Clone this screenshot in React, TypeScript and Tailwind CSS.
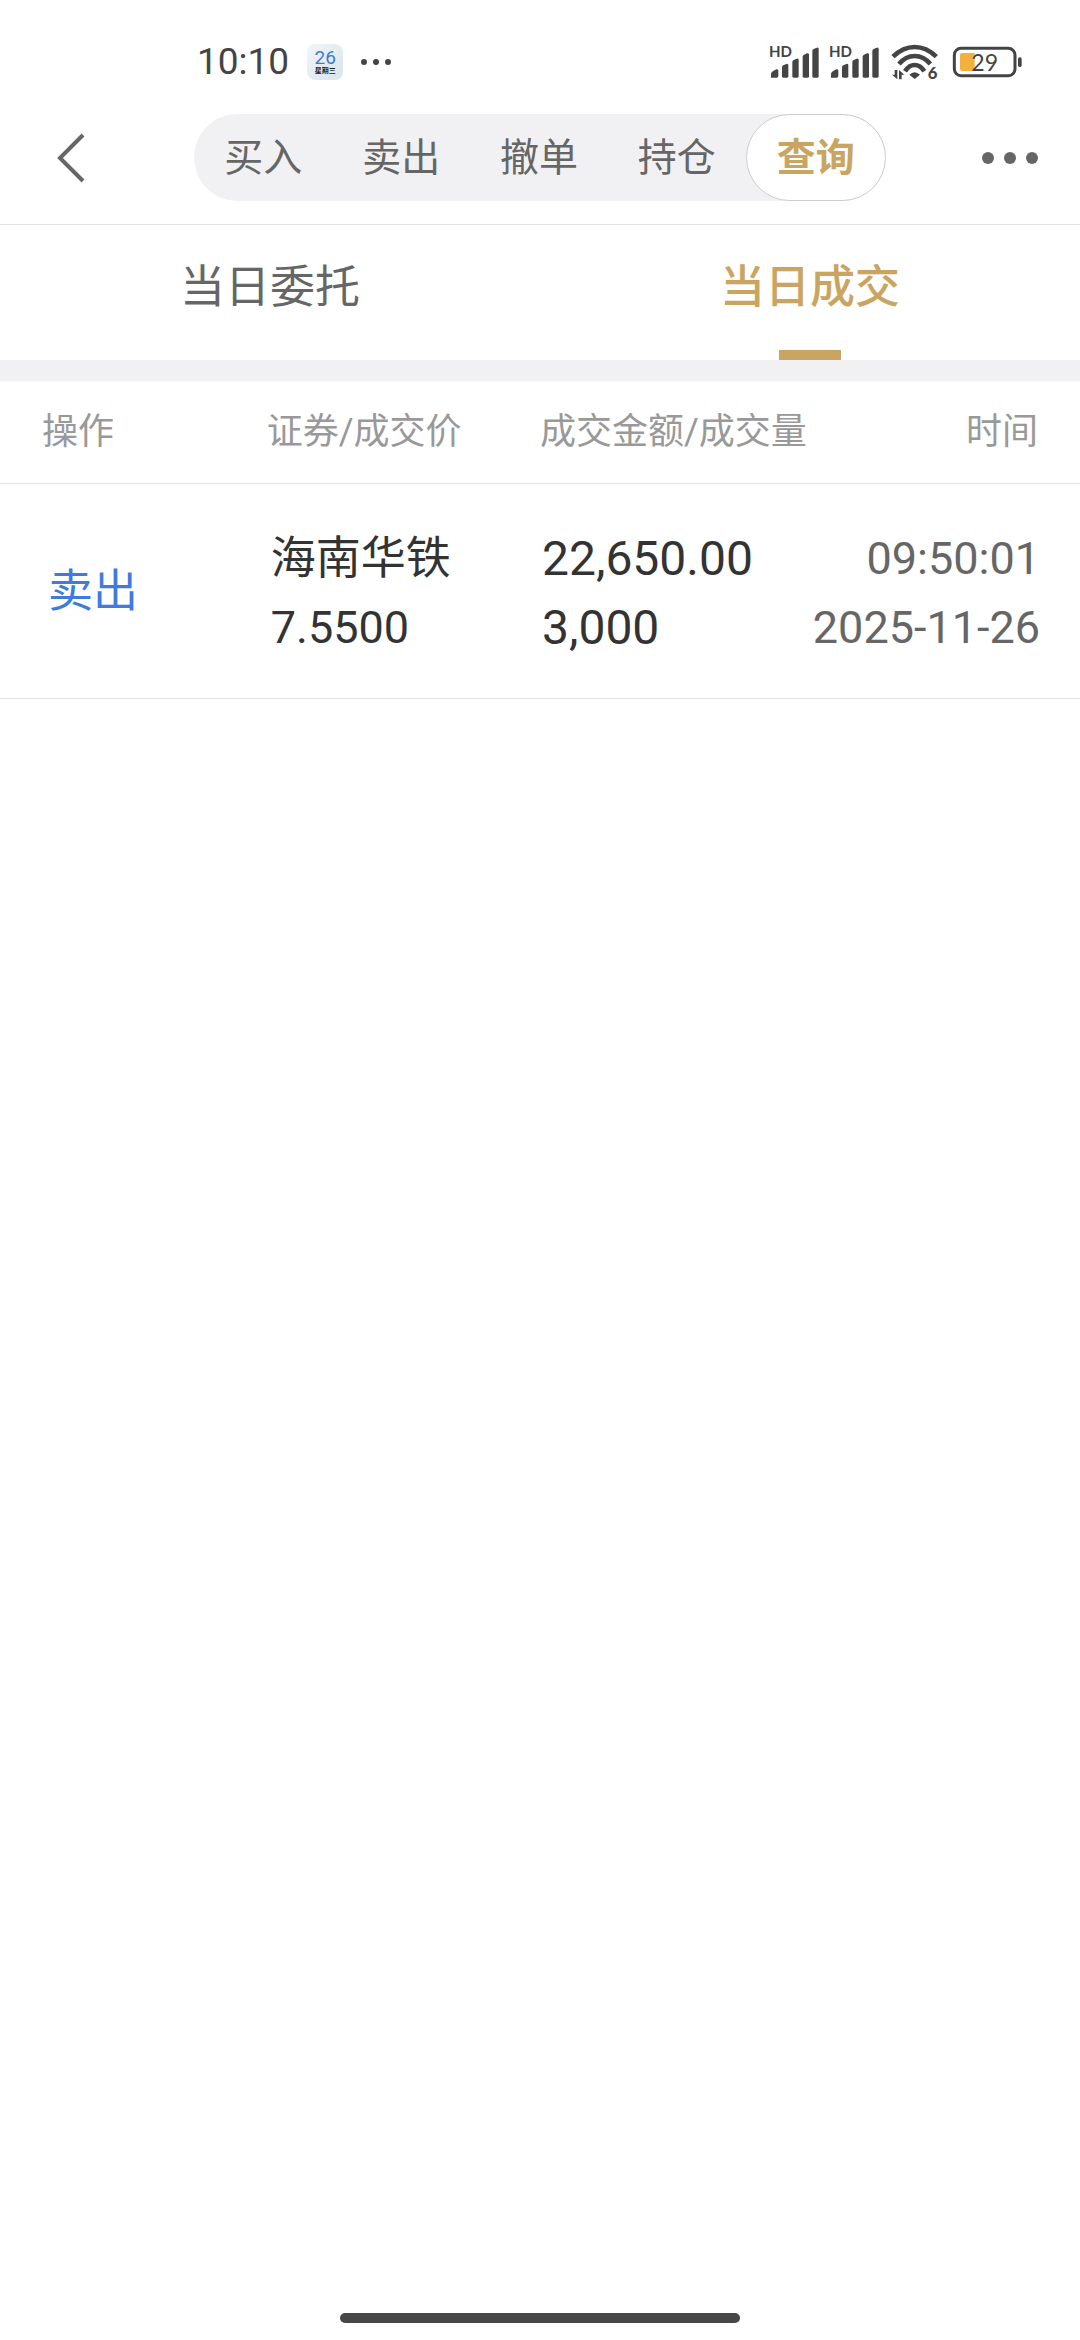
import { useState } from 'react'

type Trade = {
  side: string
  name: string
  price: string
  amount: string
  volume: string
  time: string
  date: string
}

const sections = ['买入', '卖出', '撤单', '持仓', '查询']
const tabs = ['当日委托', '当日成交']

const trades: Trade[] = [
  {
    side: '卖出',
    name: '海南华铁',
    price: '7.5500',
    amount: '22,650.00',
    volume: '3,000',
    time: '09:50:01',
    date: '2025-11-26'
  }
]

function Signal() {
  return (
    <svg viewBox="0 -15 150 126" className="w-[50px] h-[42px] overflow-visible fill-[#444]" aria-hidden="true">
      <text x="0" y="34" fontSize="45" fontWeight="700" className="font-['Lato','Open_Sans',sans-serif]">HD</text>
      <path d="M6 95V83Q7 77 14 74L22 70Q28 68 28 74V90Q28 95 23 95Z" />
      <path d="M39 91V64Q39 60 43 58L52 54Q58 52 58 58V91Q58 95 54 95H43Q39 95 39 91Z" />
      <path d="M70 91V48Q70 44 74 42L83 38Q89 36 89 42V91Q89 95 85 95H74Q70 95 70 91Z" />
      <path d="M101 91V32Q101 28 105 26L114 22Q120 20 120 26V91Q120 95 116 95H105Q101 95 101 91Z" />
      <path d="M130 91V15Q130 11 134 9L143 5Q149 3 149 9V91Q149 95 145 95H134Q130 95 130 91Z" />
    </svg>
  )
}

function Wifi() {
  return (
    <svg viewBox="0 -15 144 138" className="w-12 h-[46px] overflow-visible" aria-hidden="true">
      <g fill="none" stroke="#444" strokeWidth="14">
        <path d="M6 38Q36 9 71 9Q106 9 136 38" />
        <path d="M24 60Q44 36 71 36Q98 36 118 60" />
        <path d="M42 82Q54 63 71 63Q88 63 100 82" />
      </g>
      <path d="M55 92Q71 77 87 92L74 103Q71 106 68 103Z" fill="#444" />
      <path d="M19 78V106L3 92H11V78ZM24 106V78L40 92H32V106Z" fill="#444" />
      <text x="110" y="106" fontSize="50" fontWeight="900" fill="#444" className="font-['Lato',sans-serif]">6</text>
    </svg>
  )
}

function Battery() {
  return (
    <svg viewBox="0 0 210 96" className="w-[70px] h-8" aria-label="29%">
      <rect x="7" y="7" width="182" height="82" rx="20" fill="none" stroke="#444" strokeWidth="9" />
      <rect x="198" y="34" width="11" height="29" rx="5" fill="#444" />
      <path d="M30 21H68V75H30Q24 75 24 69V27Q24 21 30 21Z" fill="#f4b03e" />
      <text x="58" y="74" fontSize="69" fill="#444" className="font-['Lato',sans-serif]">29</text>
    </svg>
  )
}

function StatusBar() {
  return (
    <div className="flex items-center justify-between pt-9 pl-[197px] pr-[58px] text-[#444]">
      <div className="flex items-center h-[52px]">
        <span className="text-[37px] leading-[52px]">10:10</span>
        <span className="ml-[18px] size-9 rounded-lg bg-linear-to-br from-[#f1f5f8] to-[#d9e4ec] flex flex-col items-center justify-center">
          <span className="text-[19px] leading-[18px] text-[#3f7ad0]">26</span>
          <span className="text-[7px] leading-[8px] font-bold text-[#222]">星期三</span>
        </span>
        <svg viewBox="0 0 32 8" className="ml-[17px] w-8 h-2 fill-[#444]" aria-hidden="true">
          <circle cx="4" cy="4" r="3" />
          <circle cx="16" cy="4" r="3" />
          <circle cx="28" cy="4" r="3" />
        </svg>
      </div>
      <div className="flex items-center">
        <Signal />
        <span className="ml-[10px]"><Signal /></span>
        <span className="ml-3"><Wifi /></span>
        <span className="ml-[13px]"><Battery /></span>
      </div>
    </div>
  )
}

export default function App() {
  const [section, setSection] = useState('查询')
  const [tab, setTab] = useState('当日成交')

  return (
    <div className="min-h-screen flex flex-col bg-white text-[#666] font-['Roboto','Noto_Sans_CJK_SC',sans-serif]">
      <StatusBar />

      <header className="flex items-center pt-[26px] pb-[23px] border-b border-[#e2e2e2]">
        <div className="w-[18%] pl-14">
          <button aria-label="返回" className="block">
            <svg viewBox="0 0 30 50" className="w-[30px] h-[50px]" fill="none" stroke="#666" strokeWidth="4">
              <path d="M27 2L4 25L27 48" />
            </svg>
          </button>
        </div>
        <nav className="w-[64%] h-[87px] flex rounded-full bg-[#f1f1f3]">
          {sections.map(s => (
            <button
              key={s}
              onClick={() => setSection(s)}
              className={`flex-1 rounded-full text-[39px] leading-[56px] ${
                s === section ? 'bg-white border border-[#ccc] font-bold text-[#c9a561]' : ''
              }`}
            >
              {s}
            </button>
          ))}
        </nav>
        <div className="w-[18%] flex justify-end pr-[42px]">
          <button aria-label="更多">
            <svg viewBox="0 0 58 12" className="w-[58px] h-3 fill-[#666]">
              <circle cx="8" cy="6" r="6" />
              <circle cx="30" cy="6" r="6" />
              <circle cx="52" cy="6" r="6" />
            </svg>
          </button>
        </div>
      </header>

      <div className="flex border-b-[21px] border-[#f1f1f3]">
        {tabs.map(t => (
          <button
            key={t}
            onClick={() => setTab(t)}
            className={`flex-1 flex flex-col items-center text-[45px] leading-[125px] ${
              t === tab ? 'font-medium text-[#c9a561]' : ''
            }`}
          >
            {t}
            <span className={`w-[62px] h-[10px] ${t === tab ? 'bg-[#c9a561]' : ''}`}></span>
          </button>
        ))}
      </div>

      <table className="w-full table-fixed text-left">
        <thead>
          <tr className="border-b border-[#e2e2e2] text-4xl text-[#999] whitespace-nowrap">
            <th className="w-[24.7%] pl-[42px] leading-[102px] font-normal">操作</th>
            <th className="w-[25.3%] leading-[102px] font-normal">证券/成交价</th>
            <th className="w-[25%] leading-[102px] font-normal">成交金额/成交量</th>
            <th className="pr-[42px] leading-[102px] font-normal text-right">时间</th>
          </tr>
        </thead>
        <tbody>
          {trades.map(t => (
            <tr key={t.time} className="border-b border-[#e2e2e2] text-[45px] leading-[69px] text-[#333]">
              <td className="pl-12 text-[#3f7bdc]">{t.side}</td>
              <td className="pl-1 pt-10 pb-9">
                <div>{t.name}</div>
                <div>{t.price}</div>
              </td>
              <td className="pl-[2px] pt-10 pb-9 text-[48px] leading-[69px]">
                <div>{t.amount}</div>
                <div>{t.volume}</div>
              </td>
              <td className="pr-10 pt-10 pb-9 text-right whitespace-nowrap text-[#666]">
                <div>{t.time}</div>
                <div>{t.date}</div>
              </td>
            </tr>
          ))}
        </tbody>
      </table>

      <div className="mt-auto mb-[17px] mx-auto w-[37%] h-[10px] rounded-full bg-[#474747]"></div>
    </div>
  )
}
